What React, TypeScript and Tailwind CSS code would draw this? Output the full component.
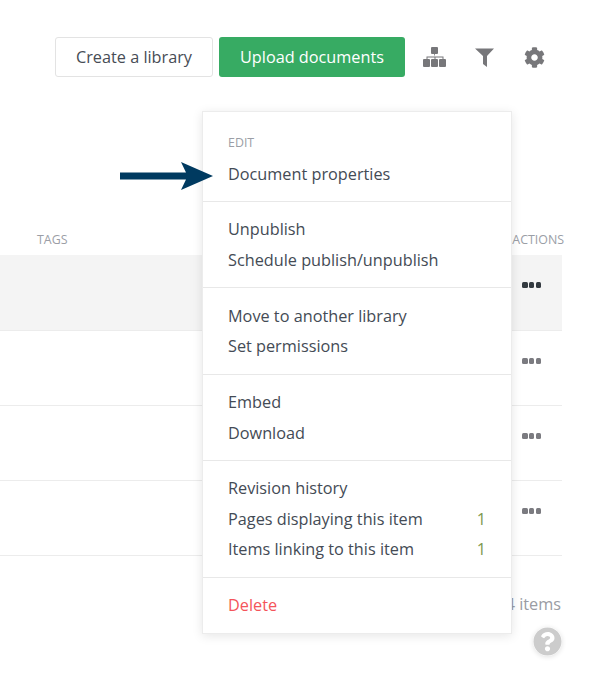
import { FaCog, FaQuestionCircle } from "react-icons/fa";

function Dots({ dark }: { dark?: boolean }) {
  const c = dark ? "bg-[#333a40]" : "bg-[#7b7b80]";
  return (
    <div className="flex gap-[1.25px]">
      <span className={`w-[5.5px] h-[5.5px] rounded-[1.5px] ${c}`} />
      <span className={`w-[5.5px] h-[5.5px] rounded-[1.5px] ${c}`} />
      <span className={`w-[5.5px] h-[5.5px] rounded-[1.5px] ${c}`} />
    </div>
  );
}

function Row({ active }: { active?: boolean }) {
  return (
    <div className={`border-b border-[#ececec] flex items-center justify-end pr-[21px] ${active ? "h-[76px] pb-[15px] bg-[#f4f4f4]" : "h-[75px] pb-[14px]"}`}>
      <Dots dark={active} />
    </div>
  );
}

function Item({ label, count, className }: { label: string; count?: string; className?: string }) {
  return (
    <div className={`flex justify-between items-center h-[30.7px] ${className ?? "text-[#444b55]"}`}>
      <span>{label}</span>
      {count && <span className="text-[#7d9a4e]">{count}</span>}
    </div>
  );
}

export default function App() {
  return (
    <div className="relative w-[612px] h-[691px] overflow-hidden bg-white text-[16.25px] font-['Open_Sans',sans-serif]">
      <div className="flex items-center justify-end h-[40px] mt-[37px] pr-[67px]">
        <button className="h-[40px] w-[158px] border border-[#e3e3e3] rounded-[3px] bg-white text-[#474c55]">
          Create a library
        </button>
        <button className="h-[40px] w-[186px] ml-[6px] rounded-[3px] bg-[#37ab63] text-white">
          Upload documents
        </button>
        <div className="flex items-center ml-[18px] text-[#77777a]">
          <svg width="23" height="20" viewBox="0 0 23 20" fill="currentColor">
            <rect x="8" y="0" width="7" height="7" rx="1" />
            <rect x="0" y="12" width="7" height="8" rx="1" />
            <rect x="8" y="12" width="7" height="8" rx="1" />
            <rect x="16" y="12" width="7" height="8" rx="1" />
            <path d="M11 7h1v2.500h8.500v2.500h-1v-1.500h-7v1.500h-1v-1.500h-7v1.500h-1v-2.500h8.500z" />
          </svg>
          <svg className="ml-[29px]" width="19" height="19" viewBox="0 0 19 19" fill="currentColor">
            <path d="M0 0.500h19l-7 7.500v11l-4-3v-8z" />
          </svg>
          <FaCog className="w-[21px] h-[21px] ml-[30px]" />
        </div>
      </div>

      <div className="w-[562px] mt-[153px]">
        <div className="h-[25px] flex justify-between pl-[37px] pt-[1px] text-[12.4px] text-[#9b9ea6] leading-[18px]">
          <span>TAGS</span>
          <span className="-mr-[2px]">ACTIONS</span>
        </div>
        <Row active />
        <Row />
        <Row />
        <Row />
        <div className="flex justify-end mt-[36px] pr-[1px] text-[#9a9ca3] leading-[24px]">4 items</div>
      </div>

      <div className="absolute left-[533px] top-[627px] w-[29px] h-[29px] rounded-full bg-white shadow-[0_1px_5px_rgba(0,0,0,0.12)]">
        <FaQuestionCircle className="w-[29px] h-[29px] text-[#cccccc]" />
      </div>

      <div className="absolute left-[202px] top-[111px] w-[310px] h-[523px] bg-white border border-[#ececec] shadow-[0_2px_10px_rgba(0,0,0,0.1)]">
        <div className="px-[25px] pt-[22px] pb-[11px] border-b border-[#e8e8e8]">
          <div className="text-[12.4px] leading-[18px] mb-[7px] text-[#9b9ea6]">EDIT</div>
          <Item label="Document properties" />
        </div>
        <div className="px-[25px] py-[12px] border-b border-[#e8e8e8]">
          <Item label="Unpublish" />
          <Item label="Schedule publish/unpublish" />
        </div>
        <div className="px-[25px] pt-[12.5px] pb-[11.8px] border-b border-[#e8e8e8]">
          <Item label="Move to another library" />
          <Item label="Set permissions" />
        </div>
        <div className="px-[25px] pt-[12px] pb-[12px] border-b border-[#e8e8e8]">
          <Item label="Embed" />
          <Item label="Download" />
        </div>
        <div className="px-[25px] pt-[11.8px] pb-[11.8px] border-b border-[#e8e8e8]">
          <Item label="Revision history" />
          <Item label="Pages displaying this item" count="1" />
          <Item label="Items linking to this item" count="1" />
        </div>
        <div className="px-[25px] pt-[11.6px] pb-[12px]">
          <Item label="Delete" className="text-[#f4545a]" />
        </div>
      </div>

      <svg className="absolute left-[120px] top-[162px]" width="94" height="28" viewBox="0 0 94 28">
        <polygon points="0,10.500 66,10.500 61,0 93,14 61,28 66,17.500 0,17.500" fill="#003a60" />
      </svg>
    </div>
  );
}
